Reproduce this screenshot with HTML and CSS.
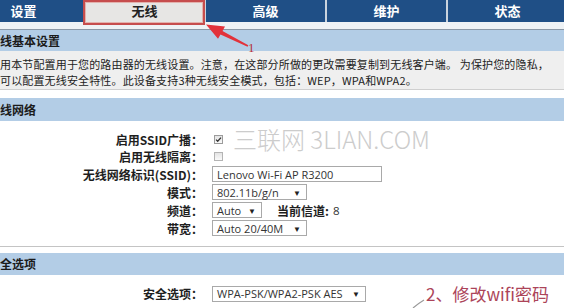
FILE: index.html
```html
<!DOCTYPE html>
<html lang="zh-CN">
<head>
<meta charset="utf-8">
<title>无线设置</title>
<link rel="stylesheet" href="styles.css">
</head>
<body>
<div class="page">
  <nav class="nav">
    <div class="tab">设置</div>
    <div class="tab active">无线</div>
    <div class="tab">高级</div>
    <div class="tab">维护</div>
    <div class="tab">状态</div>
  </nav>
  <div class="strip"></div>

  <div class="band band-first">线基本设置</div>
  <div class="desc">
    <p>用本节配置用于您的路由器的无线设置。注意，在这部分所做的更改需要复制到无线客户端。 为保护您的隐私，</p>
    <p>可以配置无线安全特性。此设备支持3种无线安全模式，包括：WEP，WPA和WPA2。</p>
  </div>

  <div class="band">线网络</div>
  <div class="form">
    <div class="row r17">
      <div class="label">启用SSID广播：</div>
      <div class="field"><span class="check checked"><svg viewBox="0 0 9 9" width="9" height="9"><path d="M2 4.6 L3.7 6.3 L7 2.6" fill="none" stroke="#333" stroke-width="1.3"/></svg></span></div>
    </div>
    <div class="row r17">
      <div class="label">启用无线隔离：</div>
      <div class="field"><span class="check"></span></div>
    </div>
    <div class="row">
      <div class="label">无线网络标识(SSID)：</div>
      <div class="field"><span class="box input">Lenovo Wi-Fi AP R3200</span></div>
    </div>
    <div class="row">
      <div class="label">模式：</div>
      <div class="field"><span class="box sel w95">802.11b/g/n<i class="arr">▼</i></span></div>
    </div>
    <div class="row">
      <div class="label">频道：</div>
      <div class="field"><span class="box sel w50">Auto<i class="arr">▼</i></span><b class="cur">当前信道:</b><span class="curval">8</span></div>
    </div>
    <div class="row">
      <div class="label">带宽：</div>
      <div class="field"><span class="box sel w95">Auto 20/40M<i class="arr">▼</i></span></div>
    </div>
  </div>

  <div class="band band-last">全选项</div>
  <div class="form form-sec">
    <div class="row r16">
      <div class="label">安全选项：</div>
      <div class="field"><span class="box sel w154">WPA-PSK/WPA2-PSK AES<i class="arr">▼</i></span></div>
    </div>
  </div>

  <div class="watermark">三联网 3LIAN.COM</div>
  <div class="hilite"></div>
  <svg class="marks" width="564" height="308" viewBox="0 0 564 308">
    <polygon points="206,24.5 225,26.5 222.5,31 248.3,45.3 247.6,46.7 220.5,34.6 218,38.8" fill="#e2323b"/>
    <path d="M424 300 Q419 303 413 308" fill="none" stroke="#9a9a9a" stroke-width="1.2"/>
  </svg>
  <span class="num1">1</span>
  <span class="note2">2、修改wifi密码</span>
</div>
</body>
</html>
```

FILE: styles.css
```css
* { box-sizing: border-box; }
html, body { margin: 0; padding: 0; }
body {
  width: 564px;
  height: 308px;
  overflow: hidden;
  background: #fff;
  font-family: "Noto Sans CJK SC", sans-serif;
  color: #222;
}
p { margin: 0; }
.page {
  position: relative;
  width: 564px;
  height: 308px;
  overflow: hidden;
}
.nav {
  display: flex;
  height: 22px;
  margin-left: -36px;
  background: #1f4f86;
}
.tab {
  flex: none;
  width: 121px;
  border-right: 2px solid #c9d3de;
  color: #fff;
  font-weight: 700;
  font-size: 13px;
  line-height: 22px;
  text-align: center;
}
.tab.active {
  background: #e7e6e4;
  color: #222;
}
.strip {
  height: 8px;
  background: #eef2f5;
  border-bottom: 1px solid #8b98a6;
}
.band {
  height: 23px;
  line-height: 23px;
  background: #b3cde6;
  font-weight: 700;
  font-size: 12px;
  color: #1b1b1b;
}
.band-first { height: 21px; line-height: 21px; }
.band-last { height: 22px; line-height: 22px; }
.desc {
  height: 39px;
  padding-top: 5px;
  background: #efefef;
  border-bottom: 1px solid #cfcfcf;
  margin-bottom: 8px;
  font-size: 11px;
  letter-spacing: 0.15px;
  line-height: 16px;
  color: #222;
  white-space: nowrap;
}
.form {
  padding: 10px 0 9px;
  border-bottom: 1px solid #c4c4c4;
  margin-bottom: 6px;
}
.form-sec {
  border-bottom: 0;
  margin-bottom: 0;
}
.row {
  display: grid;
  grid-template-columns: 203px 1fr;
  column-gap: 9px;
  height: 18px;
  align-items: center;
}
.row.r17 { height: 17px; }
.row.r16 { height: 16px; }
.label {
  text-align: right;
  font-weight: 700;
  font-size: 12px;
  color: #1e1e1e;
  white-space: nowrap;
}
.field {
  display: flex;
  align-items: center;
  font-family: "Open Sans", sans-serif;
  font-size: 11px;
  color: #333;
}
.check {
  display: inline-flex;
  width: 9px;
  height: 9px;
  margin-left: 2px;
  border: 1px solid #b4b4b4;
  background: linear-gradient(#e4e4e4, #fafafa);
}
.check.checked { border-color: #9c9c9c; }
.check svg { display: block; margin: -1px; }
.box {
  display: inline-flex;
  align-items: center;
  height: 16px;
  padding: 0 4px;
  border: 1px solid #a9a9a9;
  background: #fff;
  white-space: nowrap;
}
.input { width: 170px; }
.sel { justify-content: space-between; }
.w95 { width: 95px; }
.w50 { width: 50px; }
.w154 { width: 154px; }
.arr {
  font-style: normal;
  font-size: 8px;
  color: #222;
  margin-right: 1px;
}
.cur {
  margin-left: 15px;
  font-family: "Noto Sans CJK SC", sans-serif;
  font-size: 12px;
  font-weight: 700;
  color: #1e1e1e;
}
.curval { margin-left: 4px; font-size: 11.5px; }
.watermark {
  position: absolute;
  left: 233px;
  top: 124px;
  font-size: 24px;
  font-weight: 300;
  line-height: 30px;
  color: #cccccc;
  white-space: nowrap;
}
.hilite {
  position: absolute;
  left: 83px;
  top: 0;
  width: 122px;
  height: 25px;
  border: 2px solid #c64d4d;
  box-shadow: inset 0 0 0 1px #e3b2ad;
}
.marks {
  position: absolute;
  left: 0;
  top: 0;
  pointer-events: none;
}
.num1 {
  position: absolute;
  left: 248px;
  top: 43px;
  font-family: "Liberation Serif", serif;
  font-size: 13px;
  line-height: 10px;
  color: #b4323c;
}
.note2 {
  position: absolute;
  left: 426px;
  top: 283px;
  font-size: 17px;
  line-height: 22px;
  color: #ac4459;
  white-space: nowrap;
}
```
